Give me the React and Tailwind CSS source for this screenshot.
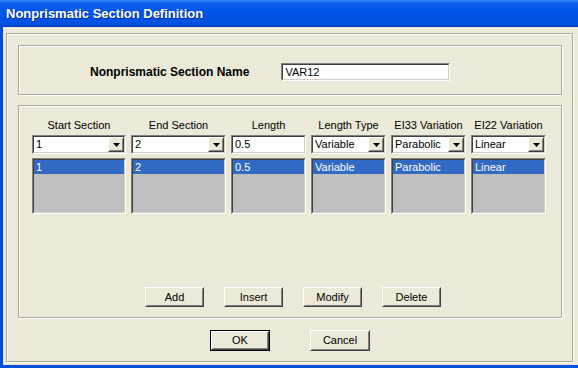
import React from "react";

function Sunken({ className = "", innerClass = "", children }) {
  return (
    <div className={"border border-t-[#808080] border-l-[#808080] border-b-white border-r-white " + className}>
      <div className={"h-full w-full border border-t-[#404040] border-l-[#404040] border-b-[#D4D0C8] border-r-[#D4D0C8] " + innerClass}>
        {children}
      </div>
    </div>
  );
}

function Raised({ className = "", innerClass = "", children }) {
  return (
    <div className={"border border-t-white border-l-white border-b-[#404040] border-r-[#404040] bg-[#ECE9D8] " + className}>
      <div className={"h-full w-full border border-t-[#ECE9D8] border-l-[#ECE9D8] border-b-[#808080] border-r-[#808080] " + innerClass}>
        {children}
      </div>
    </div>
  );
}

function Combo({ w, value, button = true }) {
  return (
    <Sunken className={"h-[19px] bg-white " + w} innerClass="flex items-stretch">
      <div className="flex-1 pl-[2px] text-[11px] leading-[15px] text-black">{value}</div>
      {button && (
        <Raised className="w-[16px]" innerClass="flex items-center justify-center">
          <svg width="7" height="4" viewBox="0 0 7 4">
            <polygon points="0,0 7,0 3.5,4" fill="#000" />
          </svg>
        </Raised>
      )}
    </Sunken>
  );
}

function ListBox({ w, value }) {
  return (
    <Sunken className={"h-[56px] bg-[#C0C0C0] " + w}>
      <div className="h-[14px] bg-[#316AC5] pl-[2px] text-[11px] leading-[14px] text-white">{value}</div>
    </Sunken>
  );
}

function Column({ w, label, value, button = true }) {
  return (
    <div className={"flex flex-col " + w}>
      <div className="h-[13px] text-center text-[11px] leading-[13px] text-black whitespace-nowrap">{label}</div>
      <div className="mt-[3px]">
        <Combo w={w} value={value} button={button} />
      </div>
      <div className="mt-[4px]">
        <ListBox w={w} value={value} />
      </div>
    </div>
  );
}

function Btn({ label, w = "w-[59px]", h = "h-[20px]" }) {
  return (
    <Raised className={w + " " + h} innerClass="flex items-center justify-center text-[11px] text-black">
      {label}
    </Raised>
  );
}

export default function App() {
  return (
    <div className="flex h-[368px] w-[578px] flex-col overflow-hidden bg-[#0050E0] font-['Liberation_Sans',Arial,sans-serif]">
      <div className="flex h-[27px] shrink-0 items-center bg-[linear-gradient(to_bottom,#3A8AFB_0%,#0A5EF0_12%,#0055E6_45%,#0052E2_85%,#0040C8_100%)] pl-[6px]">
        <span className="text-[13px] font-bold text-white [text-shadow:1px_1px_0_#0A2A9A]">
          Nonprismatic Section Definition
        </span>
      </div>
      <div className="ml-[3px] mb-[3px] flex flex-1 flex-col bg-[#ECE9D8] pl-[3px] pt-[6px]">
        <div className="flex h-[329px] w-[567px] flex-col border border-[#ACA899] shadow-[1px_1px_0_#fff,inset_1px_1px_0_#fff] pl-[11px] pt-[11px]">
          {/* Name group */}
          <div className="flex h-[50px] w-[544px] items-start border border-[#ACA899] shadow-[1px_1px_0_#fff,inset_1px_1px_0_#fff] pl-[71px] pt-[17px]">
            <div className="flex h-[18px] items-center text-[12px] font-bold text-black whitespace-nowrap">
              Nonprismatic Section Name
            </div>
            <Sunken className="ml-[32px] h-[18px] w-[169px] bg-white">
              <div className="pl-[2px] text-[11px] leading-[14px] text-black">VAR12</div>
            </Sunken>
          </div>
          {/* Table group */}
          <div className="mt-[10px] flex h-[213px] w-[544px] flex-col border border-[#ACA899] shadow-[1px_1px_0_#fff,inset_1px_1px_0_#fff] pl-[13px] pt-[13px]">
            <div className="flex gap-[5px]">
              <Column w="w-[94px]" label="Start Section" value="1" />
              <Column w="w-[95px]" label="End Section" value="2" />
              <Column w="w-[75px]" label="Length" value="0.5" button={false} />
              <Column w="w-[75px]" label="Length Type" value="Variable" />
              <Column w="w-[75px]" label="EI33 Variation" value="Parabolic" />
              <Column w="w-[75px]" label="EI22 Variation" value="Linear" />
            </div>
            <div className="mt-[73px] flex gap-[20px] pl-[113px]">
              <Btn label="Add" />
              <Btn label="Insert" />
              <Btn label="Modify" />
              <Btn label="Delete" />
            </div>
          </div>
          {/* OK / Cancel */}
          <div className="mt-[12px] flex pl-[192px]">
            <div className="h-[21px] w-[60px] border border-black">
              <Raised className="h-full w-full" innerClass="flex items-center justify-center text-[11px] text-black">
                OK
              </Raised>
            </div>
            <div className="ml-[40px]">
              <Btn label="Cancel" w="w-[60px]" h="h-[21px]" />
            </div>
          </div>
        </div>
      </div>
    </div>
  );
}
